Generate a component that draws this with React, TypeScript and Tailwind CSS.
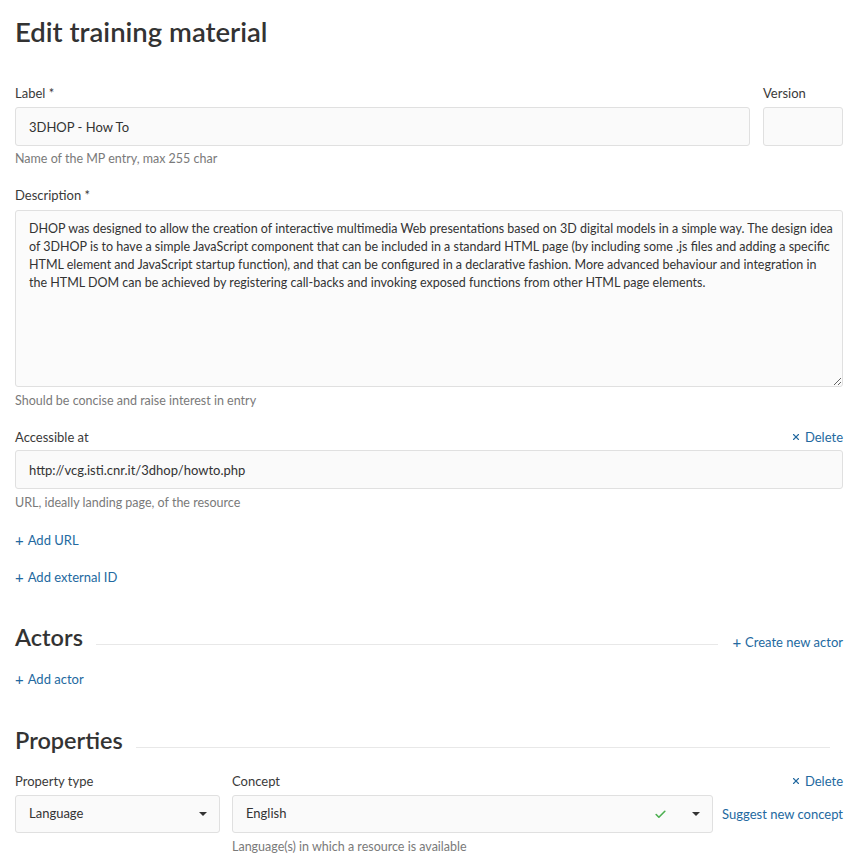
import React from 'react';
import { X, Check } from 'lucide-react';

const DESCRIPTION = [
  'DHOP was designed to allow the creation of interactive multimedia Web presentations based on 3D digital models in a simple way. The design idea',
  'of 3DHOP is to have a simple JavaScript component that can be included in a standard HTML page (by including some .js files and adding a specific',
  'HTML element and JavaScript startup function), and that can be configured in a declarative fashion. More advanced behaviour and integration in',
  'the HTML DOM can be achieved by registering call-backs and invoking exposed functions from other HTML page elements.',
].join('\n');

const inputCls =
  'h-[39px] w-full rounded-[3px] border border-[#e0e0e0] bg-[#fafafa] px-[13px] text-[13px] text-[#333] outline-none';

function Label({ children }: { children: React.ReactNode }) {
  return <div className="mb-[5px] text-[13px] leading-[18px] text-[#3a3a3a]">{children}</div>;
}

function Help({ children, className = 'mt-[4px]' }: { children: React.ReactNode; className?: string }) {
  return <div className={`${className} text-[12.5px] leading-[18px] text-[#7a7a7a]`}>{children}</div>;
}

function LinkButton({ children }: { children: React.ReactNode }) {
  return (
    <button className="flex items-center gap-[4px] text-[13px] leading-[18px] text-[#2369a0]">
      <span className="text-[15px] leading-[18px]">+</span>
      {children}
    </button>
  );
}

function DeleteLink() {
  return (
    <button className="flex items-center gap-[4px] text-[13px] leading-[18px] text-[#2369a0]">
      <X size={10} strokeWidth={2.6} />
      Delete
    </button>
  );
}

function Caret() {
  return <span className="h-0 w-0 border-x-[4.5px] border-t-[4.5px] border-x-transparent border-t-[#333]" />;
}

export default function App() {
  return (
    <div className="min-h-screen bg-white pl-[15px] pr-[11px] font-['Lato','Open_Sans',sans-serif] text-[#333]">
      <h1 className="pt-[15px] text-[27.5px] font-semibold leading-[34px] text-[#333]">Edit training material</h1>

      <div className="mt-[35px] flex gap-[13px]">
        <div className="flex-1">
          <Label>Label *</Label>
          <input className={inputCls} defaultValue="3DHOP - How To" />
          <Help>Name of the MP entry, max 255 char</Help>
        </div>
        <div className="w-[80px]">
          <Label>Version</Label>
          <input className={inputCls} defaultValue="" />
        </div>
      </div>

      <div className="mt-[18px]">
        <div className="mb-[6px] text-[13px] leading-[18px] text-[#3a3a3a]">Description *</div>
        <textarea
          className="block h-[177px] w-full resize-y rounded-[3px] border border-[#e0e0e0] bg-[#fbfbfb] px-[13px] py-[9px] text-[12.5px] leading-[18px] text-[#333] outline-none"
          defaultValue={DESCRIPTION}
          wrap="off"
        />
        <Help className="mt-[5px]">Should be concise and raise interest in entry</Help>
      </div>

      <div className="mt-[18px]">
        <div className="mb-[4px] flex items-end justify-between">
          <div className="text-[13px] leading-[18px] text-[#3a3a3a]">Accessible at</div>
          <DeleteLink />
        </div>
        <input className={inputCls} defaultValue="http://vcg.isti.cnr.it/3dhop/howto.php" />
        <Help className="mt-[5px]">URL, ideally landing page, of the resource</Help>
      </div>

      <div className="mt-[19px]">
        <LinkButton>Add URL</LinkButton>
      </div>
      <div className="mt-[19px]">
        <LinkButton>Add external ID</LinkButton>
      </div>

      <div className="mt-[36px] flex items-center">
        <h2 className="text-[23.5px] font-semibold leading-[30px] text-[#333]">Actors</h2>
        <div className="ml-[13px] mt-[14px] h-px flex-1 bg-[#e8e8e8]" />
        <div className="ml-[14px] mt-[10px]">
          <LinkButton>Create new actor</LinkButton>
        </div>
      </div>

      <div className="mt-[18px]">
        <LinkButton>Add actor</LinkButton>
      </div>

      <div className="mt-[37px] flex items-center pr-[13px]">
        <h2 className="text-[23.5px] font-semibold leading-[30px] text-[#333]">Properties</h2>
        <div className="ml-[13px] mt-[14px] h-px flex-1 bg-[#e8e8e8]" />
      </div>

      <div className="mt-[17px] flex items-start gap-[12px]">
        <div className="w-[205px]">
          <Label>Property type</Label>
          <div className="flex h-[38px] items-center justify-between rounded-[3px] border border-[#e0e0e0] bg-[#fafafa] pl-[13px] pr-[12px] text-[13px]">
            <span>Language</span>
            <Caret />
          </div>
        </div>
        <div className="flex-1">
          <div className="mb-[5px] flex items-end justify-between">
            <div className="text-[13px] leading-[18px] text-[#3a3a3a]">Concept</div>
            <DeleteLink />
          </div>
          <div className="flex items-center justify-between">
            <div className="flex h-[38px] w-[481px] items-center rounded-[3px] border border-[#e0e0e0] bg-[#fafafa] pl-[13px] pr-[12px] text-[13px]">
              <span className="flex-1">English</span>
              <Check size={13} strokeWidth={3} className="mr-[25px] text-[#4caf50]" />
              <Caret />
            </div>
            <button className="text-[13px] leading-[18px] text-[#2369a0]">Suggest new concept</button>
          </div>
          <Help className="mt-[5px]">Language(s) in which a resource is available</Help>
        </div>
      </div>
    </div>
  );
}
